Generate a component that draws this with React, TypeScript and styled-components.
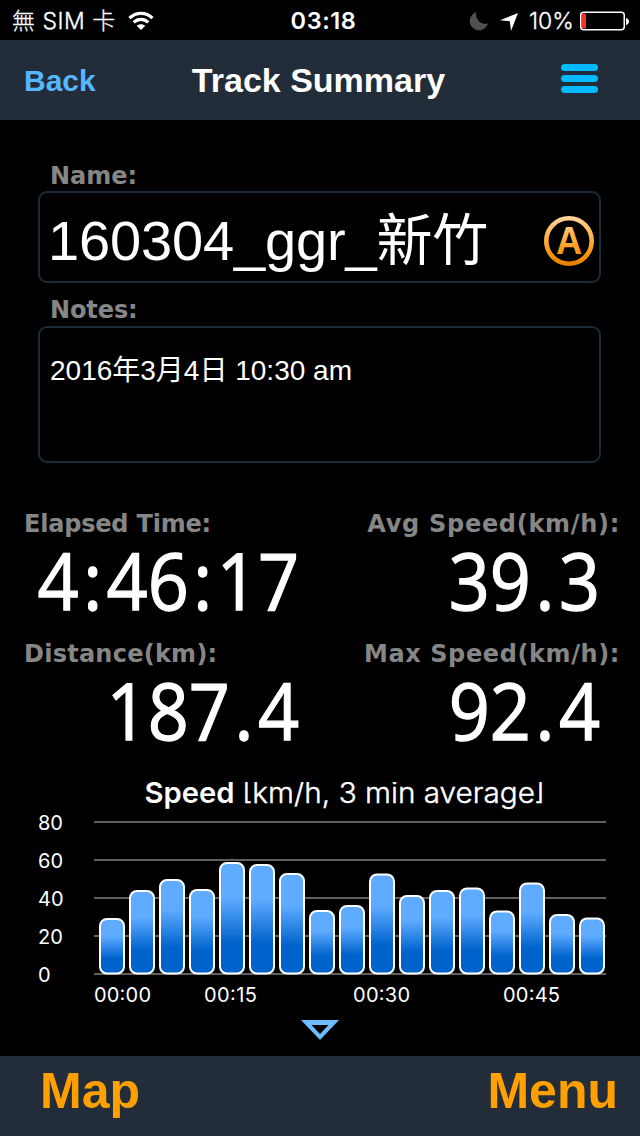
import React from 'react';
import styled, { createGlobalStyle } from 'styled-components';

const GlobalStyle = createGlobalStyle`
  html, body { margin: 0; padding: 0; background: #000; }
  * { box-sizing: border-box; }
`;

const sans = `'Liberation Sans', 'Noto Sans CJK TC', sans-serif`;
const ui = `Inter, 'Noto Sans CJK TC', sans-serif`;

const Screen = styled.div`
  width: 640px;
  height: 1136px;
  display: flex;
  flex-direction: column;
  background: #000;
  color: #fff;
  overflow: hidden;
  font-family: ${sans};
  white-space: nowrap;
`;

const StatusBar = styled.div`
  height: 40px;
  display: grid;
  grid-template-columns: 1fr auto 1fr;
  align-items: center;
  padding: 1px 11px 0 12px;
  font: 400 23px/40px ${ui};
`;

const StatusGroup = styled.div<{ $end?: boolean }>`
  display: flex;
  align-items: center;
  justify-content: ${(p) => (p.$end ? 'flex-end' : 'flex-start')};
  height: 40px;
`;

const Carrier = styled.span`
  width: 116px;
  font-weight: 300;
  letter-spacing: 0.5px;
  -webkit-text-stroke: 0.3px #fff;
`;

const Clock = styled.span`
  padding-left: 6px;
  font-weight: 600;
  font-size: 23.5px;
  letter-spacing: 0.6px;
`;

const Percent = styled.span`
  margin: 0 6px 0 10px;
  font-weight: 300;
  letter-spacing: 0.1px;
  -webkit-text-stroke: 0.3px #fff;
`;

const Header = styled.header`
  height: 80px;
  display: grid;
  grid-template-columns: 120px 1fr 120px;
  align-items: center;
  background: #222d39;
  font-weight: 700;
`;

const BackButton = styled.button`
  border: 0;
  padding: 1px 0 0 24px;
  background: none;
  text-align: left;
  color: #55b7ff;
  font: 700 30px/40px ${sans};
`;

const Title = styled.h1`
  margin: 0;
  text-align: center;
  font: 700 34px/40px ${sans};
  padding-right: 3px;
`;

const MenuIcon = styled.button`
  width: 37px;
  margin-left: 41px;
  padding: 0 0 3px;
  border: 0;
  background: none;
  display: flex;
  flex-direction: column;
  gap: 4px;
`;

const MenuLine = styled.i`
  height: 7px;
  border-radius: 4px;
  background: #00baff;
`;

const Form = styled.section`
  padding: 40px 39px 0 38px;
`;

const Label = styled.div<{ $right?: boolean; $tracking?: number }>`
  padding-top: 1px;
  height: 30px;
  color: #868686;
  font: 700 24px/30px 'DejaVu Sans', sans-serif;
  letter-spacing: ${(p) => p.$tracking ?? 0}px;
  text-align: ${(p) => (p.$right ? 'right' : 'left')};
`;

const FieldLabel = styled(Label)`
  height: 31px;
  padding-left: 12px;
`;

const Field = styled.div`
  display: flex;
  border: 2px solid #1a2b38;
  border-radius: 9px;
  padding-left: 10px;
`;

const NameField = styled(Field)`
  height: 92px;
  margin-bottom: 11px;
  padding-left: 8px;
  padding-right: 5px;
  align-items: center;
  justify-content: space-between;
  font-size: 56px;
  letter-spacing: -0.15px;
  svg { margin-top: 8px; }
`;

const NameText = styled.span`
  margin-top: -4px;
`;

const NotesField = styled(Field)`
  height: 137px;
  margin-top: 1px;
  padding-top: 23px;
  font-size: 28px;
  line-height: 40px;
`;

const Stats = styled.section`
  display: grid;
  grid-template-columns: 275px 1fr;
  padding: 45px 20px 0 24px;
`;

const Stat = styled.div`
  height: 130px;
`;

const Reading = styled.div<{ $inset: number }>`
  display: flex;
  justify-content: flex-end;
  margin: -3px ${(p) => p.$inset}px 0 0;
  height: 90px;
  font: 400 79px/90px 'Open Sans', sans-serif;
  -webkit-text-stroke: 1.3px #fff;
  transform: scaleX(0.91);
  transform-origin: right;
`;

const Mark = styled.span`
  margin: 0 5px;
`;

const ChartArea = styled.section`
  height: 288px;
  margin-top: auto;
  svg { display: block; }
`;

const Footer = styled.footer`
  height: 80px;
  display: flex;
  justify-content: space-between;
  padding: 0 22px 0 40px;
  background: #222d39;
`;

const FooterButton = styled.button`
  border: 0;
  padding: 0 0 10px;
  background: none;
  color: #ffa000;
  font: 700 50px/70px ${sans};
`;

const tops = [918, 890, 879, 889, 862, 864, 873, 910, 905, 873.5, 895, 890, 887.5, 910.5, 882.5, 914, 917.5];

const times = [
  { x: 95, w: 56, t: '00:00' },
  { x: 205, w: 52, t: '00:15' },
  { x: 354, w: 56, t: '00:30' },
  { x: 504, w: 56, t: '00:45' },
];

function Value({ text, inset }: { text: string; inset: number }) {
  return (
    <Reading $inset={inset}>
      {text.split(/([:.])/).map((part, i) => (i % 2 ? <Mark key={i}>{part}</Mark> : part))}
    </Reading>
  );
}

function SpeedChart() {
  return (
    <svg width="640" height="288" viewBox="0 768 640 288" fontFamily="Inter, 'DejaVu Sans', sans-serif" fill="#fff">
      <defs>
        <linearGradient id="bar" x1="0" y1="0" x2="0" y2="1">
          <stop offset="0.32" stopColor="#5eabff" />
          <stop offset="0.72" stopColor="#0063cc" />
        </linearGradient>
        <clipPath id="caption">
          <rect x="0" y="782" width="640" height="40" />
        </clipPath>
      </defs>
      <g clipPath="url(#caption)" fontSize="29">
        <text x="144.500" y="803" fontWeight="600" textLength="90" lengthAdjust="spacingAndGlyphs">Speed</text>
        <text x="242" y="803" fontWeight="300" stroke="#fff" strokeWidth="0.400" textLength="303" lengthAdjust="spacingAndGlyphs">
          <tspan dy="-4">[</tspan><tspan dy="4">km/h, 3 min average</tspan><tspan dy="-4">]</tspan>
        </text>
      </g>
      {[80, 60, 40, 20, 0].map((v, i) => (
        <g key={v}>
          <text x="38" y={830 + i * 38} fontSize="20">{v}</text>
          <rect x="94" y={821 + i * 38} width="512" height="2" fill="#606060" />
        </g>
      ))}
      {tops.map((top, i) => (
        <rect key={i} x={100 + i * 30} y={top + 1} width="24" height={973.5 - top - 1} rx="7" fill="url(#bar)" stroke="#fff" strokeWidth="2" />
      ))}
      {times.map(({ x, w, t }) => (
        <text key={t} x={x - 1} y="1002" fontSize="20" textLength={w + 1}>{t}</text>
      ))}
      <path d="M301 1020H339L320 1040ZM311.500 1025L320 1034L328.500 1025Z" fill="#6cbcff" fillRule="evenodd" />
    </svg>
  );
}

export default function App() {
  return (
    <Screen>
      <GlobalStyle />
      <StatusBar>
        <StatusGroup>
          <Carrier>無 SIM 卡</Carrier>
          <svg width="26" height="20" viewBox="0 0 26 20" fill="none" stroke="#fff" strokeWidth="3.200">
            <path d="M1.500 7.200C8 .8 18 .8 24.500 7.200" />
            <path d="M5.700 11.400C10 7.400 16 7.400 20.300 11.400" />
            <path d="M13 19L8.700 14.800C11 12.600 15 12.600 17.300 14.800Z" fill="#fff" stroke="none" />
          </svg>
        </StatusGroup>
        <Clock>03:18</Clock>
        <StatusGroup $end>
          <svg width="50" height="20" viewBox="0 0 50 20">
            <path d="M7.500 1A9.300 9.300 0 1 0 19 12.500A9.200 9.200 0 0 1 7.500 1Z" fill="#505050" />
            <path d="M49 2L42 20L40.800 10.200L31 9.300Z" fill="#fff" />
          </svg>
          <Percent>10%</Percent>
          <svg width="49" height="20" viewBox="0 0 49 20">
            <rect x="0.750" y="1.250" width="43.500" height="17.500" rx="3" fill="none" stroke="#fff" strokeWidth="1.500" />
            <rect x="2" y="2.500" width="4" height="15" rx="1" fill="#ff3126" />
            <path d="M46 7C50 8 50 13 46 14Z" fill="#fff" />
          </svg>
        </StatusGroup>
      </StatusBar>
      <Header>
        <BackButton>Back</BackButton>
        <Title>Track Summary</Title>
        <MenuIcon aria-label="Menu">
          <MenuLine />
          <MenuLine />
          <MenuLine />
        </MenuIcon>
      </Header>
      <Form>
        <FieldLabel>Name:</FieldLabel>
        <NameField>
          <NameText>160304_ggr_新竹</NameText>
          <svg width="50" height="50" viewBox="0 0 50 50">
            <defs>
              <linearGradient id="gold" gradientUnits="userSpaceOnUse" x1="0" y1="0" x2="0" y2="50">
                <stop offset="0" stopColor="#ffd6a0" />
                <stop offset="0.5" stopColor="#ffac38" />
                <stop offset="0.85" stopColor="#f58d00" />
                <stop offset="1" stopColor="#df7d00" />
              </linearGradient>
            </defs>
            <circle cx="25" cy="25" r="22.700" fill="none" stroke="url(#gold)" strokeWidth="4.600" />
            <text x="25" y="38" textAnchor="middle" fontFamily="Liberation Sans, sans-serif" fontWeight="700" fontSize="39" textLength="26" lengthAdjust="spacingAndGlyphs" fill="url(#gold)">A</text>
          </svg>
        </NameField>
        <FieldLabel $tracking={-0.1}>Notes:</FieldLabel>
        <NotesField>2016年3月4日 10:30 am</NotesField>
      </Form>
      <Stats>
        <Stat>
          <Label $tracking={-0.2}>Elapsed Time:</Label>
          <Value text="4:46:17" inset={0} />
        </Stat>
        <Stat>
          <Label $right $tracking={0.7}>Avg Speed(km/h):</Label>
          <Value text="39.3" inset={20} />
        </Stat>
        <Stat>
          <Label $tracking={0.25}>Distance(km):</Label>
          <Value text="187.4" inset={0} />
        </Stat>
        <Stat>
          <Label $right $tracking={0.6}>Max Speed(km/h):</Label>
          <Value text="92.4" inset={20} />
        </Stat>
      </Stats>
      <ChartArea>
        <SpeedChart />
      </ChartArea>
      <Footer>
        <FooterButton>Map</FooterButton>
        <FooterButton>Menu</FooterButton>
      </Footer>
    </Screen>
  );
}
